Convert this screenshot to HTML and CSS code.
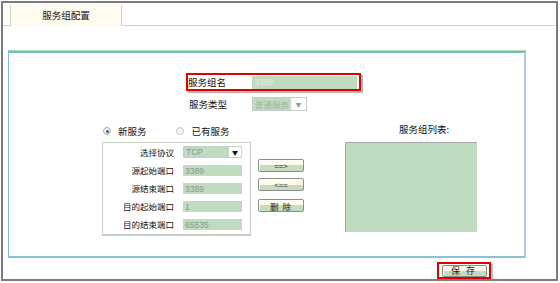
FILE: index.html
```html
<!DOCTYPE html>
<html>
<head>
<meta charset="utf-8">
<link rel="stylesheet" href="styles.css">
</head>
<body>
<div class="frame">
  <div class="tabbar">
    <div class="tab">服务组配置</div>
  </div>
  <div class="panel">
    <div class="name-row">
      <span class="lbl">服务组名</span>
      <span class="field name-field">3389</span>
    </div>
    <div class="type-row">
      <span class="lbl">服务类型</span>
      <span class="select type-select"><span class="sel-val">普通服务</span><span class="arrow grey">▼</span></span>
    </div>
    <div class="lower">
      <div class="left-col">
        <div class="radios">
          <span class="radio on"></span><span class="rlbl">新服务</span>
          <span class="radio"></span><span class="rlbl">已有服务</span>
        </div>
        <div class="box">
          <div class="frow"><span class="flbl">选择协议</span><span class="select proto"><span class="sel-val">TCP</span><span class="arrow">▼</span></span></div>
          <div class="frow"><span class="flbl">源起始端口</span><span class="field num">3389</span></div>
          <div class="frow"><span class="flbl">源结束端口</span><span class="field num">3389</span></div>
          <div class="frow"><span class="flbl">目的起始端口</span><span class="field num">1</span></div>
          <div class="frow"><span class="flbl">目的结束端口</span><span class="field num">65535</span></div>
        </div>
      </div>
      <div class="mid-col">
        <span class="btn">==&gt;</span>
        <span class="btn">&lt;==</span>
        <span class="btn del">删 除</span>
      </div>
      <div class="right-col">
        <div class="list-title">服务组列表:</div>
        <div class="listbox"></div>
      </div>
    </div>
  </div>
  <div class="save-wrap">
    <span class="btn save">保 存</span>
  </div>
</div>
</body>
</html>
```
FILE: styles.css
```css
* { box-sizing: border-box; }
body {
  margin: 0;
  background: #fff;
  font-family: "Noto Sans CJK SC", "Liberation Sans", sans-serif;
  font-size: 9.5px;
  color: #111;
}
.frame {
  margin: 1px;
  width: 557px;
  height: 280px;
  border: 2px solid #7c7c7c;
  overflow: hidden;
}
.tabbar {
  height: 23px;
  padding: 2px 0 0 7px;
  border-bottom: 1px solid #c4d8c4;
  display: flex;
}
.tab {
  width: 112px;
  height: 21px;
  background: #fffbef;
  border-left: 1px solid #c8d4c0;
  border-right: 1px solid #c8d4c0;
  display: flex;
  align-items: center;
  justify-content: center;
  padding-bottom: 2px;
}
.panel {
  margin: 25px 0 0 5px;
  width: 518px;
  height: 207px;
  border-top: 2px solid #74bcc4;
  border-left: 1px solid #7cc0c8;
  border-right: 2px solid #a8cbef;
  border-bottom: 2px solid #8cc0d6;
  box-shadow: 0 -1px 0 #b4dcb0;
}
.name-row {
  margin: 20px 0 0 177px;
  width: 175px;
  height: 18px;
  border: 2px solid #e00000;
  box-shadow: 2px 2px 1px #b8b8b8;
  display: flex;
  align-items: center;
}
.name-row .lbl { width: 64px; }
.field {
  display: flex;
  align-items: center;
  background: #c0dcc0;
  font-family: "Liberation Sans", sans-serif;
  font-size: 8.5px;
  padding-left: 2px;
}
.name-field {
  width: 105px;
  height: 13px;
  color: #e2ebe2;
}
.type-row {
  margin: 6px 0 0 180px;
  height: 14px;
  display: flex;
  align-items: center;
}
.type-row .lbl { width: 63px; }
.select {
  display: flex;
  align-items: stretch;
  border: 1px solid #c4cfc4;
  background: #fff;
}
.sel-val {
  background: #c0dcc0;
  display: flex;
  align-items: center;
  padding-left: 2px;
}
.arrow {
  flex: 1;
  display: flex;
  align-items: center;
  justify-content: center;
  font-size: 6px;
  color: #111;
}
.arrow.grey { color: #9a9a9a; }
.type-select { width: 55px; height: 14px; }
.type-select .sel-val { width: 38px; color: #9fb49f; font-size: 8.5px; }
.lower {
  display: flex;
  margin: 13px 0 0 93px;
}
.left-col { width: 149px; }
.radios {
  height: 18px;
  display: flex;
  align-items: flex-start;
  padding-top: 2px;
}
.radio {
  width: 8px;
  height: 8px;
  border-radius: 50%;
  border: 1px solid #c8c8c8;
  background: #f4f4f4;
  margin: 1px 0 0 1px;
  position: relative;
}
.radio.on { border-color: #a8a8a8; }
.radio.on::after {
  content: "";
  position: absolute;
  left: 1.5px;
  top: 1.5px;
  width: 3px;
  height: 3px;
  border-radius: 50%;
  background: #2c5aa0;
}
.rlbl { margin: 0 28px 0 7px; line-height: 11px; }
.rlbl:last-child { margin-right: 0; margin-left: 8px; }
.box {
  width: 149px;
  height: 94px;
  border: 1px solid #c8d4c4;
  border-right-color: #c8c8c8;
  border-bottom: 2px solid #c4ccc4;
  padding-top: 3px;
}
.frow {
  height: 18px;
  display: flex;
  align-items: flex-start;
}
.flbl {
  width: 71px;
  text-align: right;
  line-height: 12px;
  font-size: 8.5px;
}
.frow .field, .frow .select { margin-left: 9px; width: 59px; height: 12px; }
.frow .field { margin-top: 1px; height: 11px; }
.num { color: #8c968c; }
.proto .sel-val { width: 45px; color: #8c968c; font-family: "Liberation Sans", sans-serif; font-size: 8.5px; }
.mid-col {
  margin-left: 7px;
  padding-top: 35px;
  width: 46px;
  display: flex;
  flex-direction: column;
}
.btn {
  display: flex;
  align-items: center;
  justify-content: center;
  width: 46px;
  height: 13px;
  border: 1px solid #8c8c8c;
  border-radius: 2px;
  background: linear-gradient(#fffaea 0 50%, #c4dcc0 50% 100%);
  font-size: 8px;
  color: #222;
  box-shadow: inset 1px 1px 0 #fff;
}
.mid-col .btn + .btn { margin-top: 6px; }
.mid-col .btn.del { margin-top: 8px; font-size: 8.5px; letter-spacing: 1px; }
.right-col { margin-left: 41px; }
.list-title {
  height: 18px;
  padding-left: 54px;
  line-height: 10px;
}
.listbox {
  width: 132px;
  height: 90px;
  background: #c0dcc0;
  border-top: 1px solid #a8a8a8;
  border-left: 1px solid #a8a8a8;
}
.save-wrap {
  margin: 4px 0 0 434px;
  width: 54px;
  height: 17px;
  border: 2px solid #e00000;
  box-shadow: 2px 2px 1px #c0c8c0;
  display: flex;
  align-items: center;
  justify-content: center;
}
.save { width: 45px; height: 12px; font-size: 9px; letter-spacing: 2px; }
```
